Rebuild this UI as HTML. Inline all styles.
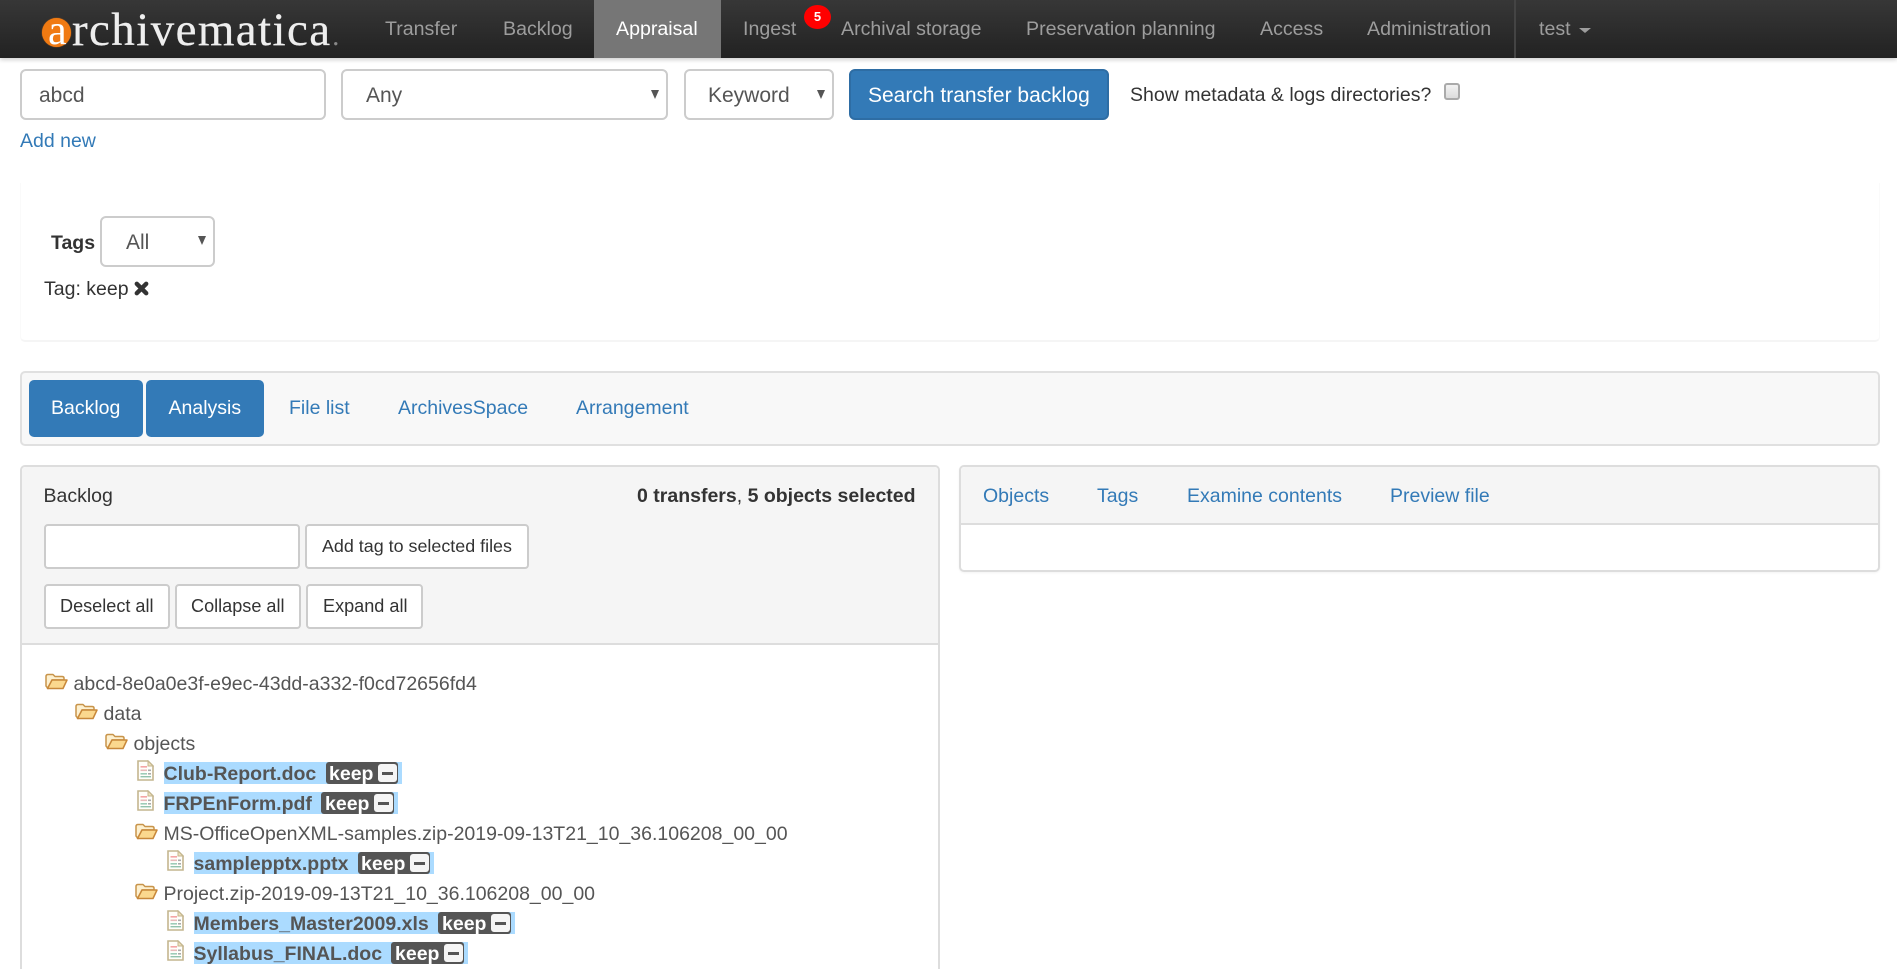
<!DOCTYPE html>
<html lang="en"><head><meta charset="utf-8"><title>Archivematica Appraisal</title>
<style>
html,body{margin:0;padding:0;width:1897px;height:969px;overflow:hidden;background:#fff;font-family:"Liberation Sans",sans-serif;color:#333}
#w{position:relative;width:1897px;height:969px;overflow:hidden}
.a{position:absolute;box-sizing:border-box}
.t{position:absolute;white-space:nowrap;line-height:30px;height:30px;font-size:19.5px;margin-top:1px}
.nav{font-size:19.6px;color:#9d9d9d;line-height:58px;height:58px;top:-1px}
.ctl{background:#fff;border:2px solid #ccc;border-radius:6px}
.sel{font-size:21px;color:#555}
.arr{position:absolute;width:0;height:0;border-left:4px solid transparent;border-right:4px solid transparent;border-top:9px solid #555}
.btn{background:#fff;border:2px solid #ccc;border-radius:4px}
.b{font-size:18.1px;color:#333;margin-top:0}
.l{color:#337ab7}
.tr{color:#555}
.hl{position:absolute;background:#abdbff;height:22px}
.lb{position:absolute;background:#555;height:22px;border-radius:3px}
.k{color:#fff;font-weight:bold}
.nm{font-weight:bold;color:#555}
.mn{position:absolute;background:#f5f5f5;width:19px;height:18px;border-radius:3px}
.mn:after{content:"";position:absolute;left:4px;top:8px;width:11px;height:2.5px;background:#555}
.logo{font-family:'Liberation Serif',serif;height:44px;line-height:44px;margin-top:0;-webkit-text-stroke:.25px currentColor}
svg{position:absolute}
</style></head><body><div id="w">

<!-- navbar -->
<div class="a" style="left:0;top:0;width:1897px;height:58px;background:linear-gradient(#373737,#222);box-shadow:0 2px 4px rgba(0,0,0,.18)"></div>
<div class="a" style="left:594px;top:0;width:127px;height:58px;background:#767676"></div>
<div class="a" style="left:42px;top:18px;width:29px;height:29px;border-radius:50%;background:#f07a12;box-shadow:0 0 1px #f07a12"></div>
<div class="t logo" style="left:48px;top:9px;font-size:42px;color:#fff;-webkit-text-stroke:0">a</div>
<div class="t logo" style="left:72px;top:8px;font-size:47px;letter-spacing:1.4px;color:#eee">rchivematica<span style="color:#888;font-size:26px;margin-left:1px">.</span></div>
<div class="t nav" style="left:385px">Transfer</div>
<div class="t nav" style="left:503px">Backlog</div>
<div class="t nav" style="left:616px;color:#fff">Appraisal</div>
<div class="t nav" style="left:743px">Ingest</div>
<div class="a" style="left:804px;top:5px;width:27px;height:24px;border-radius:50%;background:#f00;color:#fff;font-weight:bold;font-size:13px;line-height:24px;text-align:center">5</div>
<div class="t nav" style="left:841px">Archival storage</div>
<div class="t nav" style="left:1026px">Preservation planning</div>
<div class="t nav" style="left:1260px">Access</div>
<div class="t nav" style="left:1367px">Administration</div>
<div class="a" style="left:1514px;top:0;width:2px;height:58px;background:#444"></div>
<div class="t nav" style="left:1539px">test</div>
<div class="a" style="left:1579px;top:28px;width:0;height:0;border-left:6px solid transparent;border-right:6px solid transparent;border-top:5px solid #9d9d9d"></div>

<!-- search row -->
<div class="a ctl" style="left:20px;top:69px;width:306px;height:51px"></div>
<div class="t sel" style="left:39px;top:80px">abcd</div>
<div class="a ctl" style="left:341px;top:69px;width:327px;height:51px"></div>
<div class="t sel" style="left:366px;top:80px">Any</div>
<div class="arr" style="left:651px;top:90px"></div>
<div class="a ctl" style="left:684px;top:69px;width:150px;height:51px"></div>
<div class="t sel" style="left:708px;top:80px">Keyword</div>
<div class="arr" style="left:817px;top:90px"></div>
<div class="a" style="left:849px;top:69px;width:260px;height:51px;background:#337ab7;border:2px solid #2e6da4;border-radius:6px"></div>
<div class="t" style="left:868px;top:80px;font-size:21px;color:#fff">Search transfer backlog</div>
<div class="t" style="left:1130px;top:79px">Show metadata &amp; logs directories?</div>
<div class="a" style="left:1444px;top:83px;width:16px;height:17px;background:linear-gradient(#f2f2f2,#dcdcdc);border:2px solid #aaa;border-radius:3px"></div>
<div class="t l" style="left:20px;top:125px">Add new</div>

<!-- tags card -->
<div class="a" style="left:20px;top:183px;width:1860px;height:159px;border-left:1px solid #fafafa;border-bottom:2px solid #f5f5f5;border-right:1px solid #fafafa;border-radius:0 0 5px 5px"></div>
<div class="t" style="left:51px;top:227px;font-weight:bold">Tags</div>
<div class="a ctl" style="left:100px;top:216px;width:115px;height:51px"></div>
<div class="t sel" style="left:126px;top:227px">All</div>
<div class="arr" style="left:198px;top:236px"></div>
<div class="t" style="left:44px;top:273px">Tag: keep</div>
<svg style="left:134px;top:281px" width="15" height="15" viewBox="0 0 15 15"><path d="M2.8 2.8L12.2 12.2M12.2 2.8L2.8 12.2" stroke="#333" stroke-width="4.4" stroke-linecap="round" fill="none"/></svg>

<!-- tab bar -->
<div class="a" style="left:20px;top:371px;width:1860px;height:75px;background:#f8f8f8;border:2px solid #e0e0e0;border-radius:5px"></div>
<div class="a" style="left:29px;top:380px;width:114px;height:57px;background:#337ab7;border-radius:5px"></div>
<div class="a" style="left:146px;top:380px;width:118px;height:57px;background:#337ab7;border-radius:5px"></div>
<div class="t" style="left:51px;top:392px;color:#fff">Backlog</div>
<div class="t" style="left:168.5px;top:392px;color:#fff">Analysis</div>
<div class="t l" style="left:289px;top:392px">File list</div>
<div class="t l" style="left:398px;top:392px">ArchivesSpace</div>
<div class="t l" style="left:576px;top:392px">Arrangement</div>

<!-- left panel -->
<div class="a" style="left:20px;top:465px;width:920px;height:504px;background:#fff;border:2px solid #ddd;border-bottom:0;border-radius:5px 5px 0 0"></div>
<div class="a" style="left:22px;top:467px;width:916px;height:176px;background:#f5f5f5;border-radius:4px 4px 0 0"></div>
<div class="a" style="left:22px;top:643px;width:916px;height:2px;background:#ddd"></div>
<div class="t" style="left:43.5px;top:479.5px">Backlog</div>
<div class="t" style="left:637px;top:479.5px"><b>0 transfers</b>, <b>5 objects selected</b></div>
<div class="a ctl" style="left:44px;top:524px;width:256px;height:45px;border-radius:4px"></div>
<div class="a btn" style="left:305px;top:524px;width:224px;height:45px"></div>
<div class="t b" style="left:322px;top:531px;font-size:17.9px">Add tag to selected files</div>
<div class="a btn" style="left:44px;top:584px;width:126px;height:45px"></div>
<div class="t b" style="left:60px;top:591px">Deselect all</div>
<div class="a btn" style="left:175px;top:584px;width:126px;height:45px"></div>
<div class="t b" style="left:191px;top:591px">Collapse all</div>
<div class="a btn" style="left:306px;top:584px;width:117px;height:45px"></div>
<div class="t b" style="left:323px;top:591px">Expand all</div>

<!-- tree -->
<svg width="0" height="0" style="position:absolute"><defs>
<symbol id="fo" viewBox="0 0 23 17"><path d="M3 15.5L1 13V3.5Q1 1.5 3 1.5H8L10 3.5H17Q19 3.5 19 5V7H7L3 15.5Z" fill="#fdf0cf" stroke="#c8944a" stroke-width="1.5" stroke-linejoin="round"/><path d="M2.5 15.5L7 7H22L18 15.5Z" fill="#fbd88e" stroke="#c8883a" stroke-width="1.5" stroke-linejoin="round"/></symbol>
<symbol id="fi" viewBox="0 0 17 21"><path d="M1 1H11L16 6V20H1Z" fill="#fffefa" stroke="#c4b68f" stroke-width="1.6"/><path d="M11 1V6H16Z" fill="#efe3bd" stroke="#c4b68f" stroke-width="1"/><rect x="3.5" y="6" width="6.5" height="1.6" fill="#f4a5a5"/><rect x="3.5" y="9.5" width="6.5" height="1.6" fill="#e8baba"/><rect x="11" y="9.5" width="3" height="1.6" fill="#aaa"/><rect x="3.5" y="13" width="6.5" height="1.6" fill="#9ecbb8"/><rect x="11" y="13" width="3" height="1.6" fill="#aaa"/><rect x="3.5" y="16" width="10.5" height="1.4" fill="#92c2ad"/></symbol>
</defs></svg>

<svg style="left:45px;top:673px" width="23" height="17"><use href="#fo"/></svg>
<div class="t tr" style="left:73.5px;top:668px">abcd-8e0a0e3f-e9ec-43dd-a332-f0cd72656fd4</div>
<svg style="left:75px;top:703px" width="23" height="17"><use href="#fo"/></svg>
<div class="t tr" style="left:103.5px;top:698px">data</div>
<svg style="left:105px;top:733px" width="23" height="17"><use href="#fo"/></svg>
<div class="t tr" style="left:133.5px;top:728px">objects</div>

<svg style="left:137px;top:760px" width="17" height="21"><use href="#fi"/></svg>
<div class="hl" style="left:164px;top:762px;width:238px"></div>
<div class="lb" style="left:326px;top:762px;width:72px"></div>
<div class="t nm" style="left:163.5px;top:758px">Club-Report.doc</div>
<div class="t k" style="left:329px;top:758px">keep</div>
<div class="mn" style="left:378px;top:764px"></div>

<svg style="left:137px;top:790px" width="17" height="21"><use href="#fi"/></svg>
<div class="hl" style="left:164px;top:792px;width:234px"></div>
<div class="lb" style="left:321px;top:792px;width:73px"></div>
<div class="t nm" style="left:163.5px;top:788px">FRPEnForm.pdf</div>
<div class="t k" style="left:325px;top:788px">keep</div>
<div class="mn" style="left:374px;top:794px"></div>

<svg style="left:135px;top:823px" width="23" height="17"><use href="#fo"/></svg>
<div class="t tr" style="left:163.5px;top:818px">MS-OfficeOpenXML-samples.zip-2019-09-13T21_10_36.106208_00_00</div>

<svg style="left:167px;top:850px" width="17" height="21"><use href="#fi"/></svg>
<div class="hl" style="left:194px;top:852px;width:240px"></div>
<div class="lb" style="left:358px;top:852px;width:72px"></div>
<div class="t nm" style="left:193.5px;top:848px">samplepptx.pptx</div>
<div class="t k" style="left:361px;top:848px">keep</div>
<div class="mn" style="left:410px;top:854px"></div>

<svg style="left:135px;top:883px" width="23" height="17"><use href="#fo"/></svg>
<div class="t tr" style="left:163.5px;top:878px">Project.zip-2019-09-13T21_10_36.106208_00_00</div>

<svg style="left:167px;top:910px" width="17" height="21"><use href="#fi"/></svg>
<div class="hl" style="left:194px;top:912px;width:321px"></div>
<div class="lb" style="left:438px;top:912px;width:73px"></div>
<div class="t nm" style="left:193.5px;top:908px">Members_Master2009.xls</div>
<div class="t k" style="left:442px;top:908px">keep</div>
<div class="mn" style="left:491px;top:914px"></div>

<svg style="left:167px;top:940px" width="17" height="21"><use href="#fi"/></svg>
<div class="hl" style="left:194px;top:942px;width:274px"></div>
<div class="lb" style="left:391px;top:942px;width:73px"></div>
<div class="t nm" style="left:193.5px;top:937.5px">Syllabus_FINAL.doc</div>
<div class="t k" style="left:395px;top:937.5px">keep</div>
<div class="mn" style="left:444px;top:944px"></div>

<!-- right panel -->
<div class="a" style="left:959px;top:465px;width:921px;height:107px;background:#fff;border:2px solid #ddd;border-radius:5px;box-shadow:0 1px 2px rgba(0,0,0,.05)"></div>
<div class="a" style="left:961px;top:467px;width:917px;height:56px;background:#f5f5f5;border-radius:4px 4px 0 0"></div>
<div class="a" style="left:961px;top:523px;width:917px;height:2px;background:#ddd"></div>
<div class="t l" style="left:983px;top:479.5px">Objects</div>
<div class="t l" style="left:1097px;top:479.5px">Tags</div>
<div class="t l" style="left:1187px;top:479.5px">Examine contents</div>
<div class="t l" style="left:1390px;top:479.5px">Preview file</div>
</div></body></html>
